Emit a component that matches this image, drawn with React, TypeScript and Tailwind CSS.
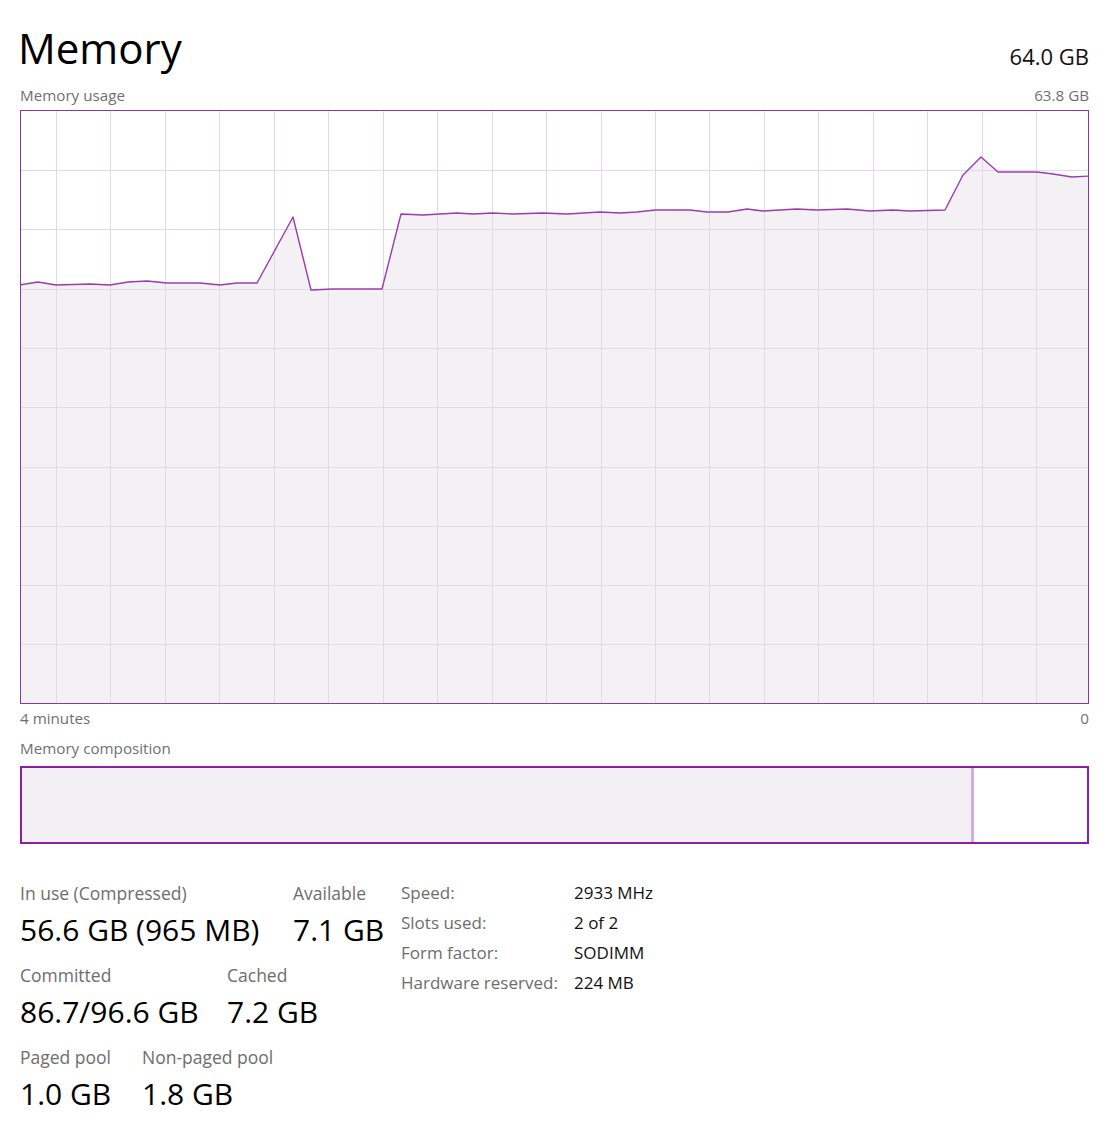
import React from 'react'

// usage history, page coordinates taken from the graph
const usage: [number, number][] = [
  [20, 285], [38, 282], [56, 285], [90, 284], [110, 285], [128, 282], [147, 281],
  [167, 283], [200, 283], [220, 285], [237, 283], [257, 283], [293, 217], [311, 290],
  [333, 289], [360, 289], [382, 289], [401, 214], [423, 215], [457, 213], [473, 214],
  [493, 213], [513, 214], [543, 213], [567, 214], [600, 212], [620, 213], [637, 212],
  [655, 210], [690, 210], [707, 212], [728, 212], [747, 209], [763, 211], [797, 209],
  [817, 210], [847, 209], [870, 211], [893, 210], [910, 211], [945, 210], [963, 175],
  [981, 157], [998, 172], [1037, 172], [1053, 174], [1072, 177], [1090, 176],
]

const W = 1067
const H = 592

function UsageGraph() {
  const pts = usage.map(([x, y]) => [x - 21, y - 111] as [number, number])
  const line = pts.map(([x, y]) => `${x},${y}`).join(' ')
  const area = `${pts[0][0]},${H} ${line} ${pts[pts.length - 1][0]},${H}`
  const vLines = Array.from({ length: 19 }, (_, i) => 35 + i * 54.45)
  const hLines = Array.from({ length: 9 }, (_, i) => 59 + i * 59.3)

  return (
    <div className="border border-[#8a3a9e] h-[594px]">
      <svg width={W} height={H} viewBox={`0 0 ${W} ${H}`} className="block">
        <polygon points={area} fill="#f4f1f5" />
        {vLines.map((x) => (
          <line key={'v' + x} x1={Math.round(x) + 0.5} x2={Math.round(x) + 0.5} y1={0} y2={H} stroke="#e4d8e7" strokeWidth={1} />
        ))}
        {hLines.map((y) => (
          <line key={'h' + y} x1={0} x2={W} y1={Math.round(y) + 0.5} y2={Math.round(y) + 0.5} stroke="#e4d8e7" strokeWidth={1} />
        ))}
        <polyline points={line} fill="none" stroke="#9a3cb0" strokeWidth={1.4} strokeLinejoin="round" />
      </svg>
    </div>
  )
}

function Stat({ label, value, width }: { label: string; value: string; width?: string }) {
  return (
    <div className={`${width ?? ''} whitespace-nowrap`}>
      <div className="text-[17.5px] leading-[30px] text-[#6d6d6d]">{label}</div>
      <div className="mt-[3px] text-[30px] leading-[38px] text-black">{value}</div>
    </div>
  )
}

const info = [
  ['Speed:', '2933 MHz'],
  ['Slots used:', '2 of 2'],
  ['Form factor:', 'SODIMM'],
  ['Hardware reserved:', '224 MB'],
]

export default function App() {
  return (
    <div
      className="w-[1108px] h-[1137px] bg-white pl-[20px] pr-[19px] overflow-hidden"
      style={{ fontFamily: '"Open Sans", "Noto Sans", sans-serif' }}
    >
      <div className="flex justify-between items-start pt-[24px]">
        <h1 className="-ml-[2px] text-[42px] leading-[48px] text-black">Memory</h1>
        <div className="mt-[18px] text-[22px] leading-[28px] text-[#111]">64.0 GB</div>
      </div>

      <div className="flex justify-between mt-[13px] text-[15.2px] leading-[20px] text-[#707070]">
        <span>Memory usage</span>
        <span>63.8 GB</span>
      </div>

      <div className="mt-[5px]">
        <UsageGraph />
      </div>

      <div className="flex justify-between mt-[4px] text-[15.2px] leading-[20px] text-[#707070]">
        <span>4 minutes</span>
        <span>0</span>
      </div>

      <div className="mt-[10px] text-[15.2px] leading-[20px] text-[#707070]">Memory composition</div>

      <div className="mt-[8px] h-[78px] border-2 border-[#8b1fa7] flex">
        <div className="w-[949px] bg-[#f3f0f5]" />
        <div className="w-[3px] bg-[#cfafdb]" />
        <div className="flex-1 bg-white" />
      </div>

      <div className="flex mt-[34px]">
        <div className="w-[361px] shrink-0 flex flex-col gap-[11px]">
          <div className="flex">
            <Stat label="In use (Compressed)" value="56.6 GB (965 MB)" width="w-[273px] shrink-0" />
            <Stat label="Available" value="7.1 GB" />
          </div>
          <div className="flex">
            <Stat label="Committed" value="86.7/96.6 GB" width="w-[207px] shrink-0" />
            <Stat label="Cached" value="7.2 GB" />
          </div>
          <div className="flex">
            <Stat label="Paged pool" value="1.0 GB" width="w-[122px] shrink-0" />
            <Stat label="Non-paged pool" value="1.8 GB" />
          </div>
        </div>

        <div className="ml-[20px] text-[17px] leading-[30px] whitespace-nowrap">
          {info.map(([k, v]) => (
            <div key={k} className="flex">
              <span className="w-[173px] shrink-0 text-[#6d6d6d]">{k}</span>
              <span className="text-[#111]">{v}</span>
            </div>
          ))}
        </div>
      </div>
    </div>
  )
}
